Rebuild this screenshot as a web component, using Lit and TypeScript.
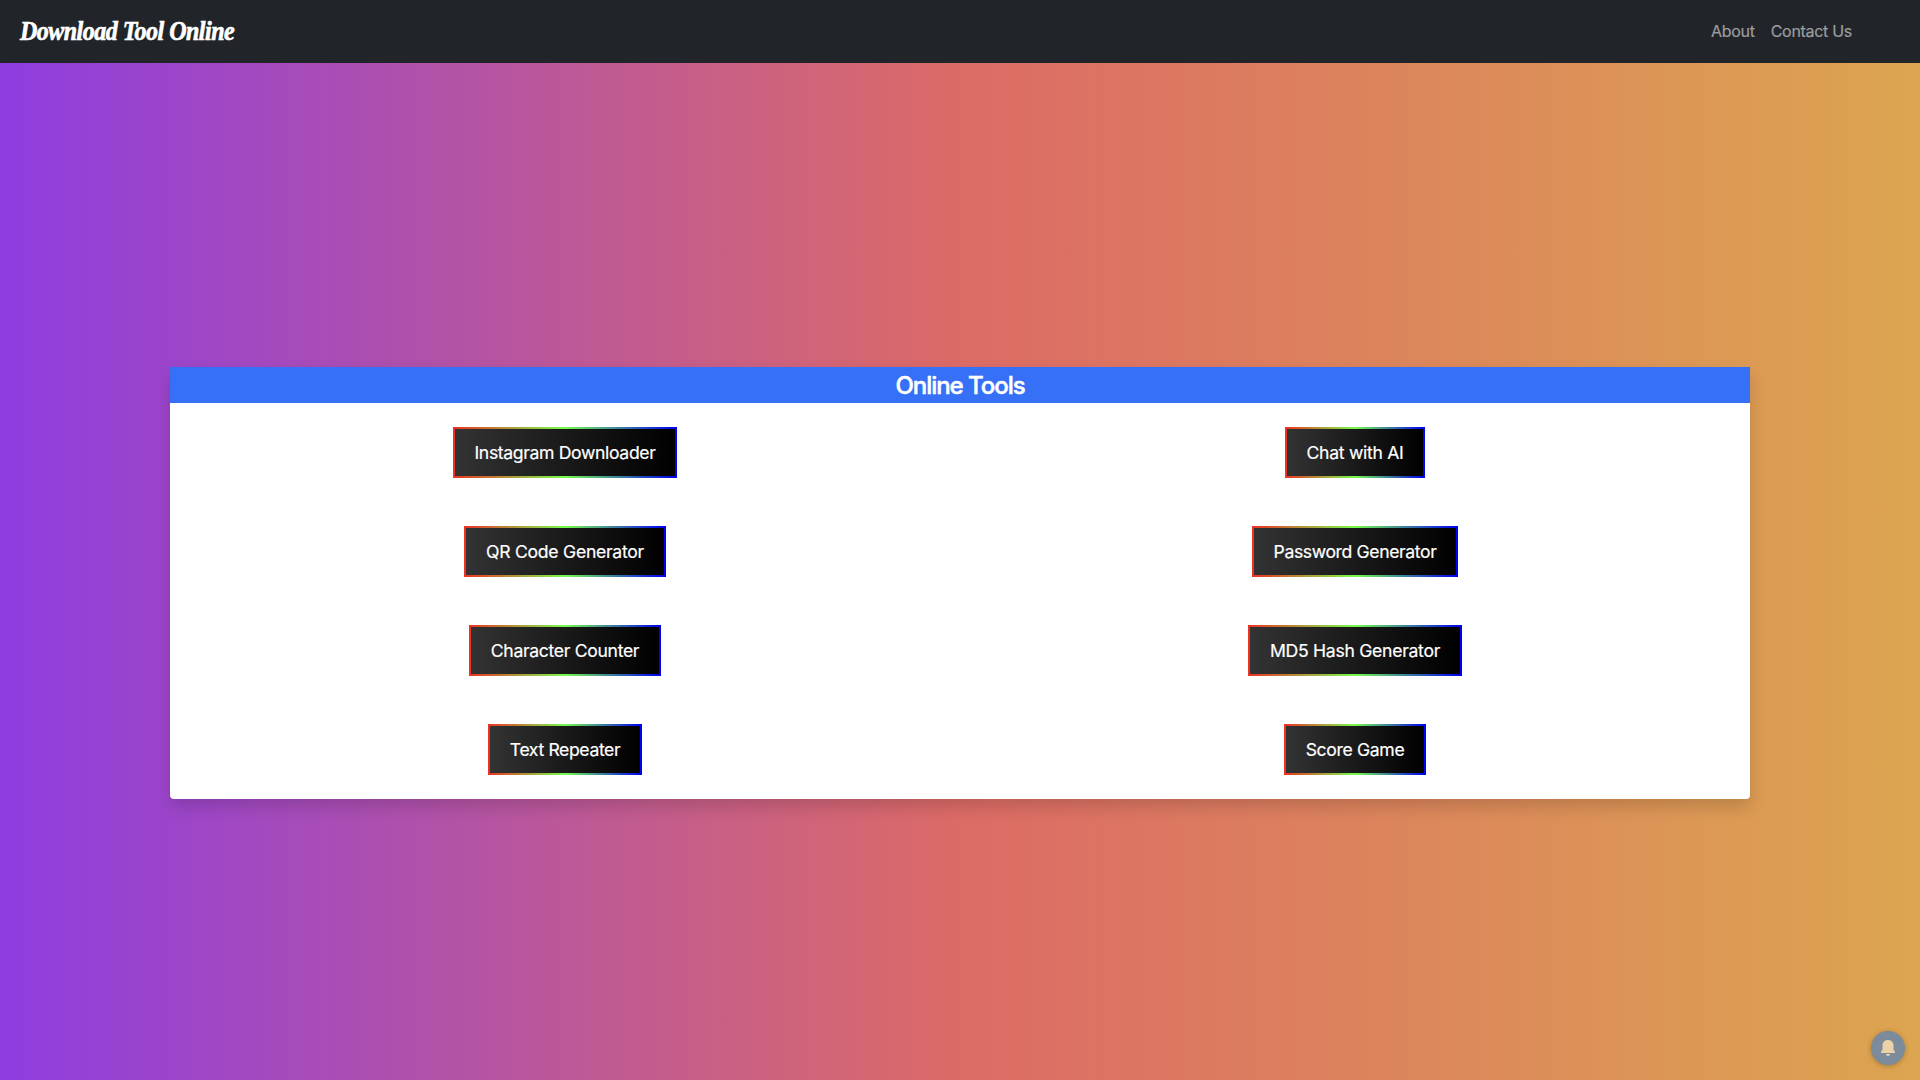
import { LitElement, html, css } from 'lit';
import { customElement } from 'lit/decorators.js';
import { styleMap } from 'lit/directives/style-map.js';

interface Tool {
  name: string;
  width: number;
  tracking: number;
}

const TOOLS: Tool[] = [
  { name: 'Instagram Downloader', width: 224, tracking: -0.35 },
  { name: 'Chat with AI', width: 140, tracking: -0.3 },
  { name: 'QR Code Generator', width: 202, tracking: -0.27 },
  { name: 'Password Generator', width: 206, tracking: -0.38 },
  { name: 'Character Counter', width: 192, tracking: -0.32 },
  { name: 'MD5 Hash Generator', width: 214, tracking: -0.28 },
  { name: 'Text Repeater', width: 154, tracking: -0.38 },
  { name: 'Score Game', width: 142, tracking: -0.34 },
];

@customElement('app-root')
export class AppRoot extends LitElement {
  static styles = css`
    :host { display: block; font-family: Inter, 'Liberation Sans', sans-serif; font-size: 16px; line-height: 1.5; }
    * { box-sizing: border-box; }
    .page { height: 100vh; display: flex; flex-direction: column; overflow: hidden;
      background: linear-gradient(90deg, #8e3de0, #dc6b66, #dca550); }
    .nav { height: 63px; flex: none; background: #212529; display: flex; align-items: center; justify-content: space-between; padding: 0 68px 2px 20px; }
    .brand { font: italic 700 27px/40px 'Liberation Serif', serif; letter-spacing: -0.6px; color: #fff; white-space: nowrap; -webkit-text-stroke: 0.7px #fff; transform: scaleX(0.89); transform-origin: left center; }
    .links { display: flex; gap: 16px; color: #9b9d9f; letter-spacing: -0.3px; -webkit-text-stroke: 0.2px #9b9d9f; }
    .main { flex: 1; display: flex; justify-content: center; align-items: flex-start; padding-top: 304px; }
    .card { width: 1580px; height: 432px; background: #fff; border-radius: 0 0 4px 4px; box-shadow: 0 8px 16px rgba(0,0,0,.15); }
    .title { height: 36px; margin: 0; padding-top: 2px; background: #3570f6; color: #fff; display: flex; justify-content: center; align-items: center; font-size: 24px; font-weight: 500; letter-spacing: -1.05px; -webkit-text-stroke: 0.5px #fff; }
    .grid { display: grid; grid-template-columns: 1fr 1fr; row-gap: 48px; padding-top: 24px; justify-items: center; }
    .tool { height: 51px; border: 2px solid; border-image: linear-gradient(90deg, #eb3323, #75fb4c, #0000f5) 1; background: linear-gradient(to right, #333, #000); color: #fff;
      padding: 0; display: flex; align-items: center; justify-content: center; white-space: nowrap; font-size: 17.6px; font-family: inherit; -webkit-text-stroke: 0.2px #fff; }
    .bell { position: absolute; left: 1871px; top: 1031px; width: 34px; height: 34px; border-radius: 50%; background: #7b8b9c; box-shadow: 0 1px 5px rgba(0,0,0,.25); display: flex; align-items: center; justify-content: center; }
  `;

  render() {
    return html`
      <div class="page">
        <nav class="nav">
          <div class="brand">Download Tool Online</div>
          <div class="links"><span>About</span><span>Contact Us</span></div>
        </nav>
        <main class="main">
          <section class="card">
            <h2 class="title">Online Tools</h2>
            <div class="grid">
              ${TOOLS.map((t) => html`<button class="tool" style=${styleMap({ width: `${t.width}px`, letterSpacing: `${t.tracking}px` })}>${t.name}</button>`)}
            </div>
          </section>
        </main>
        <div class="bell"><svg width="16" height="18" viewBox="0 0 16 18"><path fill="#ebd2a9" d="M8 1C4.800 1 2.500 3.200 2.500 6.500V10.500L1 13V14H15V13L13.500 10.500V6.500C13.500 3.200 11.200 1 8 1ZM5.800 15Q6 17 8 17T10.200 15Z"/></svg></div>
      </div>`;
  }
}
